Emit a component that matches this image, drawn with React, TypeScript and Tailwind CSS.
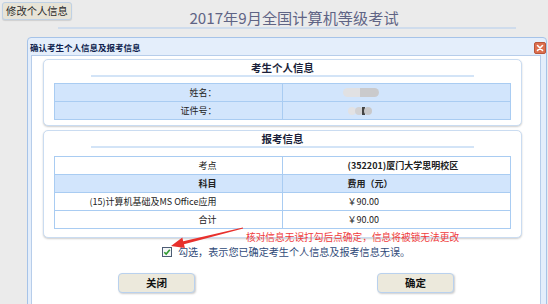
import React from "react";

function Row({
  left,
  right,
  blue = false,
  bold = false,
  rightBold = false,
  first = false,
}: {
  left: React.ReactNode;
  right: React.ReactNode;
  blue?: boolean;
  bold?: boolean;
  rightBold?: boolean;
  first?: boolean;
}) {
  return (
    <div
      className={
        "grid grid-cols-2 " +
        (first ? "h-[17px]" : "h-[18px] border-t border-[#a9ccf2]") +
        (blue ? " bg-[#d2e5fc]" : " bg-white")
      }
    >
      <div
        className={
          "border-r border-[#a9ccf2] pr-[65px] text-right text-[9px] leading-[17px] text-[#222] whitespace-nowrap " +
          (bold ? "font-bold" : "")
        }
      >
        {left}
      </div>
      <div
        className={
          "pl-[65px] text-left text-[9px] leading-[17px] text-[#222] whitespace-nowrap " +
          (bold || rightBold ? "font-bold" : "")
        }
      >
        {right}
      </div>
    </div>
  );
}

function Card({
  title,
  children,
  className = "",
  tableMt,
  pb,
}: {
  title: string;
  children: React.ReactNode;
  className?: string;
  tableMt: string;
  pb: string;
}) {
  return (
    <div
      className={
        "ml-[11px] w-[479px] rounded-[5px] border border-[#cadcf1] bg-white shadow-[0_1px_2px_rgba(0,0,0,0.2)] " +
        pb +
        " " +
        className
      }
    >
      <div className="h-[15px] text-center text-[10.5px] font-bold leading-[15px] text-[#1b1f3a]">
        {title}
      </div>
      <div className="mx-auto h-[2px] w-[383px] bg-[#d3e4f7]" />
      <div className={"mx-[10px] border border-[#a9ccf2] " + tableMt}>{children}</div>
    </div>
  );
}

export default function App() {
  return (
    <div className="h-[304px] w-[548px] overflow-hidden bg-[#ebebeb] font-['Noto_Sans_CJK_SC',sans-serif]">
      {/* Top header */}
      <div className="grid h-[37px]">
        <div className="col-start-1 row-start-1 ml-[58px] mr-[32px] h-[29px] border-b-2 border-[#cfdcec] pl-[14px] pt-[7px] text-center text-[15.2px] leading-[20px] text-[#5f6485]">
          2017年9月全国计算机等级考试
        </div>
        <div className="col-start-1 row-start-1 ml-[2px] mt-[2px] h-[18px] w-[70px] self-start justify-self-start rounded-[3px] border border-[#bfd1e5] bg-[#e7e4d7] text-center text-[10.3px] leading-[16px] text-[#2b2b2b] shadow-[0_1px_1px_rgba(0,0,0,0.12)]">
          修改个人信息
        </div>
      </div>

      {/* Dialog window */}
      <div className="ml-[27px] w-[520px] rounded-t-[4px] border border-[#a6c3e8] bg-[#e4eefb]">
        <div className="flex h-[17px] items-start justify-between pl-[2px]">
          <span className="mt-[3px] text-[8.5px] font-bold leading-[12px] text-[#0f1f4f]">
            确认考生个人信息及报考信息
          </span>
          <div className="mt-[4px] flex h-[12px] w-[12px] items-center justify-center rounded-[2px] border border-[#b9553a] bg-[#dc6f4f]">
            <svg width="8" height="8" viewBox="0 0 8 8">
              <path d="M1.5 1.5 L6.5 6.5 M6.5 1.5 L1.5 6.5" stroke="white" strokeWidth="1.6" strokeLinecap="round" />
            </svg>
          </div>
        </div>

        <div className="relative ml-[3px] mr-[5px] h-[260px] border border-[#b7cdea] bg-white pt-[3px]">
          <Card title="考生个人信息" tableMt="mt-[6px]" pb="pb-[5px]">
            <Row
              first
              blue
              left="姓名："
              right={
                <span className="mt-[4px] inline-flex h-[9px] w-[36px] -translate-x-[5px] overflow-hidden rounded-full align-top">
                  <span className="h-full w-[17px] bg-[#e1e1e3]" />
                  <span className="h-full w-[19px] bg-[#cacacc]" />
                </span>
              }
            />
            <Row
              left="证件号："
              blue
              right={
                <span className="mt-[4px] inline-flex h-[9px] items-center align-top">
                  <span className="h-[8px] w-[8px] rounded-full bg-[#e2e2e4]" />
                  <span className="-ml-[1px] h-[8px] w-[8px] rounded-full bg-[#d2d2d4]" />
                  <span className="-ml-[1px] h-[8px] w-[3px] bg-[#444]" />
                  <span className="-ml-[1px] h-[8px] w-[8px] rounded-full bg-[#c8c8ca]" />
                </span>
              }
            />
          </Card>

          <Card title="报考信息" className="mt-[4px]" tableMt="mt-[8px]" pb="pb-[8px]">
            <Row first left="考点" right="(352201)厦门大学思明校区" rightBold />
            <Row blue bold left="科目" right="费用（元）" />
            <Row left="(15)计算机基础及MS Office应用" right="￥90.00" />
            <Row left="合计" right="￥90.00" />
          </Card>

          {/* Checkbox row */}
          <div className="mt-[8px] flex h-[12px] items-center justify-center gap-[6px]">
            <svg width="10" height="10" viewBox="0 0 10 10" className="shrink-0">
              <rect x="0.5" y="0.5" width="9" height="9" fill="#f4f6f8" stroke="#4d5d74" />
              <path d="M2.3 5.2 L4.2 7.1 L7.8 2.8" fill="none" stroke="#2f9a2f" strokeWidth="1.6" />
            </svg>
            <span className="text-[10.1px] leading-[12px] text-[#2f4a78] whitespace-nowrap">
              勾选，表示您已确定考生个人信息及报考信息无误。
            </span>
          </div>

          {/* Buttons */}
          <div className="mt-[15px] flex justify-center gap-[182px]">
            <button className="h-[20px] w-[77px] rounded-[4px] border border-[#b9d1ee] bg-[#ece9dc] text-[10.5px] font-bold text-[#111] shadow-[1px_1px_2px_rgba(0,0,0,0.2)]">
              关闭
            </button>
            <button className="h-[20px] w-[77px] rounded-[4px] border border-[#b9d1ee] bg-[#ece9dc] text-[10.5px] font-bold text-[#111] shadow-[1px_1px_2px_rgba(0,0,0,0.2)]">
              确定
            </button>
          </div>

          {/* Annotation overlay */}
          <div className="absolute left-[214px] top-[175px] text-[9.7px] leading-[12px] text-[#f03c3c] whitespace-nowrap">
            核对信息无误打勾后点确定，信息将被锁无法更改
          </div>
          <svg
            className="pointer-events-none absolute left-0 top-0"
            width="300"
            height="260"
            viewBox="32 56 300 260"
          >
            <polygon
              points="242.9,227.5 183.2,241.3 182.3,237.5 171,246 184.9,248.1 184.0,244.3 243.1,228.5"
              fill="#e8302c"
            />
          </svg>
        </div>
      </div>
    </div>
  );
}
